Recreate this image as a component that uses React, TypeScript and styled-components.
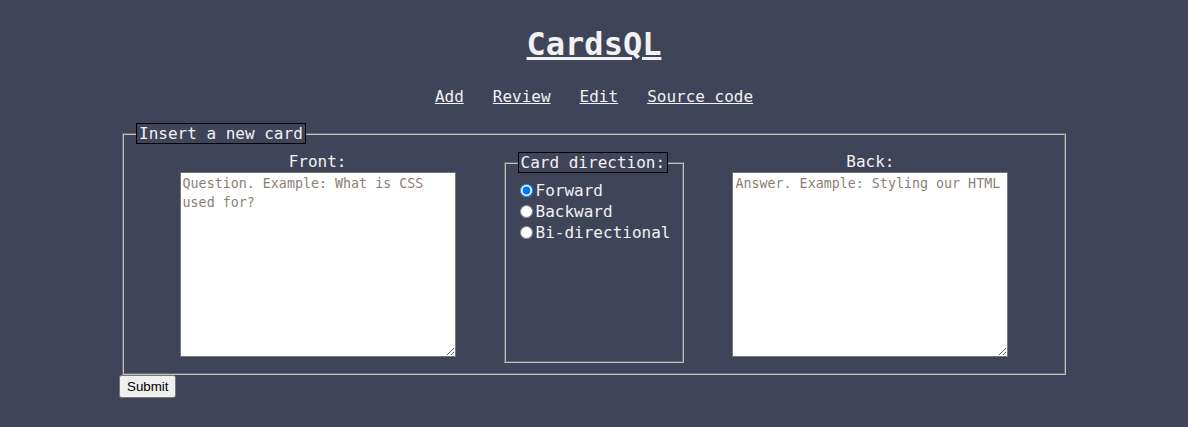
import styled, { createGlobalStyle } from "styled-components";

const GlobalStyle = createGlobalStyle`
	body {
		margin: 8px;
		background-color: #404459;
		color: #f2f2f2;
		font-family: "DejaVu Sans Mono", "Liberation Mono", monospace;
		font-size: 16px;
	}
`;

export default function App() {
	return (
		<>
			<GlobalStyle />
			<Title>
				<TitleLink href="#">CardsQL</TitleLink>
			</Title>
			<Nav>
				<NavLink href="#">Add</NavLink>
				<NavLink href="#">Review</NavLink>
				<NavLink href="#">Edit</NavLink>
				<NavLink href="#">Source code</NavLink>
			</Nav>
			<Form onSubmit={(e) => e.preventDefault()}>
				<MainFieldset>
					<Legend>Insert a new card</Legend>
					<CardSide
						label="Front:"
						placeholder="Question. Example: What is CSS used for?"
					/>
					<DirectionFieldset>
						<Legend>Card direction:</Legend>
						<RadioRow>
							<Radio type="radio" name="direction" defaultChecked />
							Forward
						</RadioRow>
						<RadioRow>
							<Radio type="radio" name="direction" />
							Backward
						</RadioRow>
						<RadioRow>
							<Radio type="radio" name="direction" />
							Bi-directional
						</RadioRow>
					</DirectionFieldset>
					<CardSide
						label="Back:"
						placeholder="Answer. Example: Styling our HTML"
					/>
				</MainFieldset>
				<SubmitButton type="submit">Submit</SubmitButton>
			</Form>
		</>
	);
}

interface CardSideProps {
	label: string;
	placeholder: string;
}

const CardSide = ({ label, placeholder }: CardSideProps) => {
	return (
		<Side>
			<SideLabel>{label}</SideLabel>
			<CardText placeholder={placeholder} />
		</Side>
	);
};

const Title = styled.h1`
	text-align: center;
	font-size: 32px;
	margin: 17px 0 24px;
`;

const TitleLink = styled.a`
	color: #f2f2f2;
`;

const Nav = styled.nav`
	display: flex;
	justify-content: center;
	gap: 29px;
	margin: 0 0 17px;
`;

const NavLink = styled.a`
	color: #f2f2f2;
`;

const Form = styled.form`
	width: 948px;
	margin: 0 auto;
`;

const MainFieldset = styled.fieldset`
	display: flex;
	justify-content: center;
	align-items: stretch;
	gap: 48px;
	margin: 0 2px;
	border: 2px groove #c0c0c0;
	padding: 0 12px 10px;
`;

const Legend = styled.legend`
	border: 1px solid #000;
	padding: 0 2px;
	line-height: 19px;
	white-space: nowrap;
`;

const Side = styled.div`
	display: flex;
	flex-direction: column;
	align-items: center;
	padding-top: 8px;
`;

const SideLabel = styled.label`
	line-height: 19px;
`;

const CardText = styled.textarea`
	box-sizing: border-box;
	width: 276px;
	height: 185px;
	margin: 1px 0 6px;
	padding: 2px;
	font-family: "DejaVu Sans Mono", "Liberation Mono", monospace;
	font-size: 13.33px;
	line-height: 18.5px;
	color: #222;
	background: #fff;

	&::placeholder {
		color: #8a7f76;
	}
`;

const DirectionFieldset = styled.fieldset`
	width: 180px;
	box-sizing: border-box;
	margin: 8px 0 0;
	border: 2px groove #c0c0c0;
	padding: 7px 12px 10px;
	display: flex;
	flex-direction: column;
`;

const RadioRow = styled.label`
	display: flex;
	align-items: center;
	height: 21px;
	line-height: 19px;
	white-space: nowrap;
`;

const Radio = styled.input`
	flex: none;
	width: 13px;
	height: 13px;
	margin: 0 3px 0 2px;
`;

const SubmitButton = styled.button`
	margin: 0 0 0 -1px;
	font-family: "Liberation Sans", Arial, sans-serif;
	font-size: 13.33px;
	padding: 2px 6px;
`;
